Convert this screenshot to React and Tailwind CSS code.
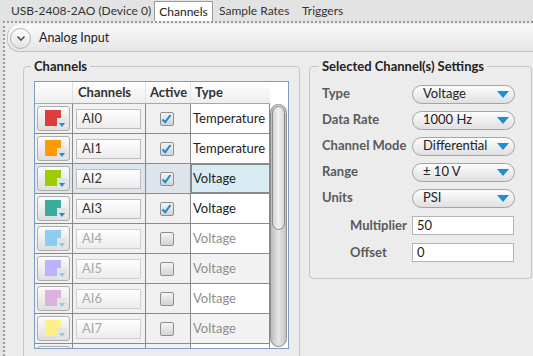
import { useState } from "react";

const channels = [
  { name: "AI0", color: "#dc3d3d", active: true, type: "Temperature" },
  { name: "AI1", color: "#ff9a00", active: true, type: "Temperature" },
  { name: "AI2", color: "#9dcc00", active: true, type: "Voltage", selected: true },
  { name: "AI3", color: "#3aac9b", active: true, type: "Voltage" },
  { name: "AI4", color: "#7fcaee", active: false, type: "Voltage" },
  { name: "AI5", color: "#b4acff", active: false, type: "Voltage", alt: true },
  { name: "AI6", color: "#dcabdb", active: false, type: "Voltage" },
  { name: "AI7", color: "#fff07c", active: false, type: "Voltage", alt: true },
  // only the top edge of this row shows, so it carries no text
  { name: "", color: "#f0b0b0", active: false, type: "" },
];

const settings = [
  { label: "Type", value: "Voltage" },
  { label: "Data Rate", value: "1000 Hz" },
  { label: "Channel Mode", value: "Differential" },
  { label: "Range", value: "± 10 V" },
  { label: "Units", value: "PSI" },
];

function Arrow({ className }) {
  return (
    <svg width="12" height="7" viewBox="0 0 12 7" className={className}>
      <path d="M0 0 H12 L6 7 Z" fill="#1b8fd2" />
    </svg>
  );
}

function ColorButton({ color, active }) {
  return (
    <div className="relative ml-[2px] h-[25px] w-[33px] rounded-[3px] border border-[#adadad] bg-gradient-to-b from-[#fbfbfb] to-[#dedede]">
      <div
        className="absolute left-[7px] top-[3px] h-[16px] w-[16px]"
        style={{ backgroundColor: color, opacity: active ? 1 : 0.9 }}
      />
      <div className="absolute left-[19px] top-[11px] flex h-[11px] w-[10px] items-end justify-center bg-[#e4e4e4] pb-[2px]">
        <svg width="6" height="4" viewBox="0 0 6 4">
          <path d="M0 0 H6 L3 4 Z" fill={active ? "#1b8fd2" : "#8cc8ec"} />
        </svg>
      </div>
    </div>
  );
}

function CheckBox({ checked }) {
  return (
    <div className="flex h-[14px] w-[14px] items-center justify-center rounded-[2px] border border-[#8f8f8f] bg-gradient-to-b from-[#f4f4f4] to-[#d4d4d4]">
      {checked && (
        <svg width="11" height="10" viewBox="0 0 11 10">
          <path d="M1.5 5.5 L4.2 8.2 L9.5 1" stroke="#1a8ad4" strokeWidth="2" fill="none" />
        </svg>
      )}
    </div>
  );
}

function ChannelRow({ ch }) {
  const side = ch.selected ? "bg-[#dfe5ec]" : "bg-[#f1f1f1]";
  return (
    <div className="flex h-[30px] shrink-0 border-b border-[#8a8a8a]">
      <div className={`flex w-[38px] items-center border-r border-[#8a8a8a] ${side}`}>
        <ColorButton color={ch.color} active={ch.active} />
      </div>
      <div className={`flex w-[73px] items-center border-r border-[#8a8a8a] ${side}`}>
        <div
          className={`ml-[3px] flex h-[20px] w-[65px] items-center border bg-gradient-to-b from-[#ffffff] to-[#ececec] pl-[5px] text-[13px] ${
            ch.active ? "border-[#bdbdbd] text-[#333]" : "border-[#d0d0d0] text-[#a8a8a8]"
          }`}
        >
          {ch.name}
        </div>
      </div>
      <div className={`flex w-[45px] items-center justify-center border-r border-[#8a8a8a] pr-[3px] ${side}`}>
        <CheckBox checked={ch.active} />
      </div>
      <div
        className={`flex w-[79px] items-center border-r border-[#8a8a8a] text-[13px] ${
          ch.selected
            ? "border border-[#3a86a3] bg-[#d9ecf3] pl-[1px] text-[#222]"
            : ch.alt
            ? "bg-[#f3f3f3] pl-[2px]"
            : "bg-white pl-[2px]"
        } ${ch.active ? "text-[#222]" : "text-[#8e8e8e]"}`}
      >
        {ch.type}
      </div>
    </div>
  );
}

function Dropdown({ value }) {
  return (
    <div className="flex h-[19px] w-[103px] items-center justify-between rounded-full border border-[#a4a4a4] bg-gradient-to-b from-[#fdfdfd] to-[#e0e0e0] pl-[10px] pr-[5px] text-[13px] text-[#222]">
      <span>{value}</span>
      <Arrow />
    </div>
  );
}

export default function App() {
  const [tab] = useState("Channels");
  const tabs = [
    { name: "USB-2408-2AO (Device 0)", w: "w-[150px] pl-[7px]" },
    { name: "Channels", w: "w-[59px] justify-center" },
    { name: "Sample Rates", w: "w-[83px] pl-[6px]" },
    { name: "Triggers", w: "w-[60px] pl-[6px]" },
  ];

  return (
    <div className="h-[356px] w-[533px] overflow-hidden bg-[#e3e3e3] font-['Lato',sans-serif] text-[#222]">
      <div className="flex h-[21px] items-end whitespace-nowrap pl-[4px] text-[12px]">
        {tabs.map((t) =>
          t.name === tab ? (
            <div
              key={t.name}
              className={`flex h-[20px] shrink-0 items-center border border-b-0 border-[#9a9a9a] bg-white ${t.w}`}
            >
              {t.name}
            </div>
          ) : (
            <div key={t.name} className={`flex h-[20px] shrink-0 items-center text-[#333] ${t.w}`}>
              {t.name}
            </div>
          )
        )}
      </div>

      <div className="ml-[3px] h-[335px] border-l-2 border-t-2 border-dotted border-[#9a9a9a] bg-[#ececec]">
        <div className="ml-[2px] mt-[1px] flex h-[28px] items-center rounded-l-[12px] border-b border-l border-[#c2c2c2] bg-gradient-to-b from-[#fafafa] to-[#e6e6e6] pl-[2px] pt-[1px]">
          <div className="flex h-[21px] w-[21px] items-center justify-center rounded-full border border-[#b2b2b2] bg-gradient-to-b from-[#fdfdfd] to-[#e3e3e3]">
            <svg width="10" height="7" viewBox="0 0 10 7">
              <path d="M1.5 1.5 L5 5 L8.5 1.5" stroke="#555" strokeWidth="1.6" fill="none" />
            </svg>
          </div>
          <span className="ml-[8px] text-[12.5px] text-[#222]">Analog Input</span>
        </div>

        <div className="flex items-start pl-[18px] pt-[6px]">
          <fieldset className="h-[320px] w-[277px] shrink-0 rounded-[4px] border border-[#c6c6c6] pl-[10px]">
            <legend className="-ml-[3px] px-[3px] text-[13px] font-bold leading-[16px] text-[#222]">
              Channels
            </legend>
            <div className="mt-[7px] flex h-[268px] w-[255px] overflow-hidden border border-[#7f9dc2] bg-white">
              <div className="flex w-[235px] flex-col">
                <div className="flex h-[22px] shrink-0 border-b border-[#a8a8a8] bg-gradient-to-b from-[#ffffff] to-[#eeeeee] text-[13px] font-bold text-[#333]">
                  <div className="w-[38px] border-r border-[#e2e2e2]" />
                  <div className="flex w-[73px] items-center border-r border-[#e2e2e2] pl-[5px]">Channels</div>
                  <div className="flex w-[45px] items-center border-r border-[#e2e2e2] pl-[4px]">Active</div>
                  <div className="flex w-[79px] items-center pl-[4px]">Type</div>
                </div>
                {channels.map((ch, i) => (
                  <ChannelRow key={i} ch={ch} />
                ))}
              </div>
              <div className="flex w-[18px] flex-col bg-white">
                <div className="h-[22px] shrink-0" />
                <div className="relative mr-[1px] h-[243px] rounded-full border border-[#8c8c8c] bg-gradient-to-r from-[#bdbdbd] via-[#e6e6e6] to-[#c4c4c4]">
                  <div className="absolute left-[1px] right-[1px] top-[1px] h-[124px] rounded-full border border-[#8a8a8a] bg-gradient-to-r from-[#d4d4d4] via-[#f2f2f2] to-[#d8d8d8]" />
                </div>
              </div>
            </div>
          </fieldset>

          <fieldset className="ml-[9px] w-[223px] shrink-0 rounded-[4px] border border-[#c6c6c6] pb-[12px] pl-[12px]">
            <legend className="-ml-[3px] px-[3px] text-[13px] font-bold leading-[16px] text-[#222]">
              Selected Channel(s) Settings
            </legend>
            <div className="mt-[7px] flex flex-col">
              {settings.map((s) => (
                <div key={s.label} className="flex h-[26px] items-center">
                  <div className="w-[90px] text-[13px] font-bold text-[#5a5a5a]">{s.label}</div>
                  <Dropdown value={s.value} />
                </div>
              ))}
              <div className="flex h-[28px] items-center pt-[1px]">
                <div className="w-[90px] pl-[28px] text-[13px] font-bold text-[#5a5a5a]">Multiplier</div>
                <div className="flex h-[19px] w-[102px] items-center border border-[#b4b4b4] bg-white pl-[4px] text-[13px] text-[#222]">
                  50
                </div>
              </div>
              <div className="flex h-[27px] items-center">
                <div className="w-[90px] pl-[28px] text-[13px] font-bold text-[#5a5a5a]">Offset</div>
                <div className="flex h-[19px] w-[102px] items-center border border-[#b4b4b4] bg-white pl-[4px] text-[13px] text-[#222]">
                  0
                </div>
              </div>
            </div>
          </fieldset>
        </div>
      </div>
    </div>
  );
}
